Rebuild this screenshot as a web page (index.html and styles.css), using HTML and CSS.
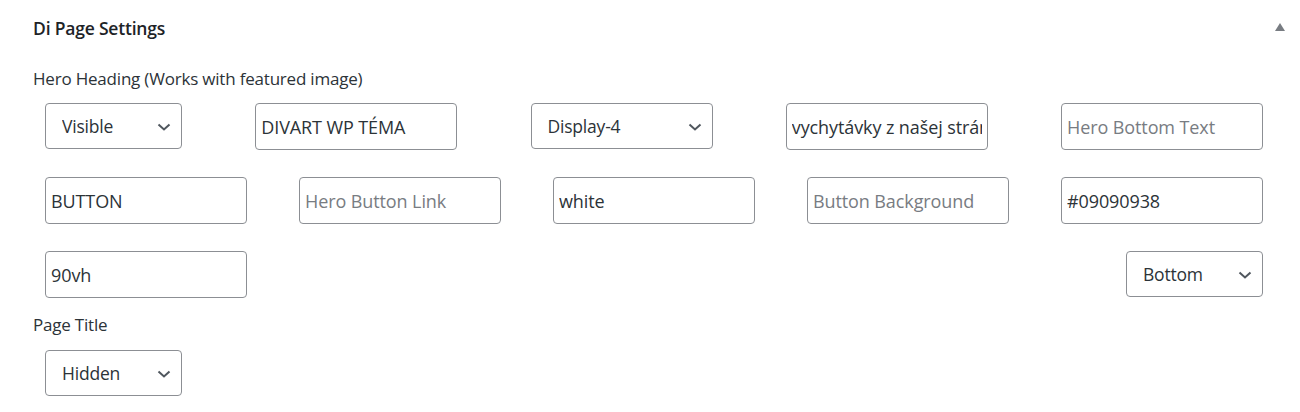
FILE: index.html
```html
<!DOCTYPE html>
<html lang="en">
<head>
  <meta charset="UTF-8" />
  <title>Di Page Settings</title>
  <link rel="stylesheet" href="styles.css">
</head>
<body>
  <div class="postbox">
    <div class="postbox-header">
      <h2>Di Page Settings</h2>
      <span class="toggle-arrow"></span>
    </div>
    <div class="inside">
      <p class="field-label">Hero Heading (Works with featured image)</p>
      <div class="row">
        <span class="select-wrap sel-sm">
          <select><option>Visible</option><option>Hidden</option></select>
          <svg class="chevron" viewBox="0 0 14 8" width="14" height="8"><path d="M1.5 1.5 7 6.5 12.5 1.5" /></svg>
        </span>
        <input type="text" value="DIVART WP TÉMA">
        <span class="select-wrap sel-md">
          <select><option>Display-4</option></select>
          <svg class="chevron" viewBox="0 0 14 8" width="14" height="8"><path d="M1.5 1.5 7 6.5 12.5 1.5" /></svg>
        </span>
        <input type="text" value="vychytávky z našej stránky">
        <input type="text" placeholder="Hero Bottom Text">
      </div>
      <div class="row">
        <input type="text" value="BUTTON">
        <input type="text" placeholder="Hero Button Link">
        <input type="text" value="white">
        <input type="text" placeholder="Button Background">
        <input type="text" value="#09090938">
      </div>
      <div class="row row-end">
        <input type="text" value="90vh">
        <span class="select-wrap sel-sm">
          <select><option>Bottom</option><option>Center</option></select>
          <svg class="chevron" viewBox="0 0 14 8" width="14" height="8"><path d="M1.5 1.5 7 6.5 12.5 1.5" /></svg>
        </span>
      </div>
      <p class="field-label label-page">Page Title</p>
      <div class="row row-end">
        <span class="select-wrap sel-sm">
          <select><option>Hidden</option><option>Visible</option></select>
          <svg class="chevron" viewBox="0 0 14 8" width="14" height="8"><path d="M1.5 1.5 7 6.5 12.5 1.5" /></svg>
        </span>
      </div>
    </div>
  </div>
</body>
</html>
```

FILE: styles.css
```css
body {
  margin: 0;
  background: #fff;
  color: #1d2327;
  font-family: "Open Sans", "Noto Sans", sans-serif;
}
.postbox-header {
  height: 56px;
  display: flex;
  align-items: center;
  justify-content: space-between;
  padding: 0 15px 0 33px;
}
.postbox-header h2 {
  margin: 0;
  font-size: 17.5px;
  font-weight: 600;
  letter-spacing: -0.2px;
  color: #1d2327;
}
.toggle-arrow {
  width: 0;
  height: 0;
  border-left: 5px solid transparent;
  border-right: 5px solid transparent;
  border-bottom: 8px solid #787c82;
  margin-top: -3px;
}
.inside {
  padding: 0 37px 0 33px;
}
.field-label {
  margin: 13px 0 14px;
  font-size: 17px;
  letter-spacing: -0.2px;
  line-height: 20px;
  color: #2c3338;
}
.label-page {
  margin: 17px 0 15px;
}
.row {
  display: flex;
  justify-content: space-between;
  align-items: flex-start;
  padding-left: 12px;
  margin-bottom: 27px;
}
.row-end {
  margin-bottom: 0;
}
input {
  box-sizing: border-box;
  width: 202px;
  height: 47px;
  padding: 0 5px;
  border: 1px solid #8c8f94;
  border-radius: 4px;
  font-family: inherit;
  font-size: 18px;
  letter-spacing: -0.1px;
  color: #2c3338;
  background: #fff;
}
input::placeholder {
  color: #787c82;
}
.select-wrap {
  position: relative;
  display: inline-block;
}
select {
  box-sizing: border-box;
  width: 100%;
  height: 46px;
  padding: 0 30px 0 16px;
  border: 1px solid #8c8f94;
  border-radius: 4px;
  font-family: inherit;
  font-size: 17.5px;
  letter-spacing: -0.2px;
  color: #2c3338;
  background: #fff;
  appearance: none;
  -webkit-appearance: none;
}
.sel-sm { width: 137px; }
.sel-md { width: 182px; }
.chevron {
  position: absolute;
  right: 11px;
  top: 20px;
  fill: none;
  stroke: #50575e;
  stroke-width: 2;
  pointer-events: none;
}
```
